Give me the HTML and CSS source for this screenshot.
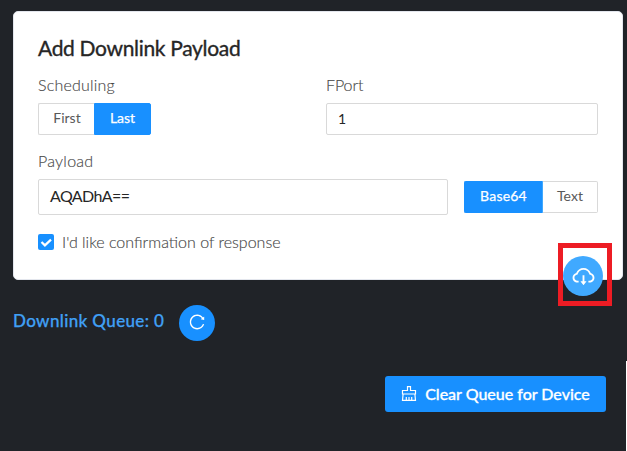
FILE: index.html
```html
<!DOCTYPE html>
<html lang="en">
<head>
<meta charset="utf-8">
<title>Downlink</title>
<link rel="stylesheet" href="styles.css">
</head>
<body>
<main class="page">
  <section class="card">
    <h1 class="title"><span>Add Downlink Payload</span></h1>
    <div class="row">
      <div class="field">
        <div class="label"><span class="t-sched">Scheduling</span></div>
        <div class="group">
          <button class="opt first"><span class="t-first">First</span></button>
          <button class="opt last on"><span class="t-last">Last</span></button>
        </div>
      </div>
      <div class="field port">
        <div class="label"><span class="t-port">FPort</span></div>
        <div class="input small">1</div>
      </div>
    </div>
    <div class="label payload-label"><span class="t-pay">Payload</span></div>
    <div class="payload-row">
      <div class="input large"><span class="t-value">AQADhA==</span></div>
      <div class="group">
        <button class="opt base on"><span class="t-base">Base64</span></button>
        <button class="opt text"><span class="t-text">Text</span></button>
      </div>
    </div>
    <div class="confirm">
      <span class="check"><svg width="16" height="16" viewBox="0 0 16 16"><path d="M3.500 8 6.900 11.400 13 5.600" fill="none" stroke="#fff" stroke-width="2.200"/></svg></span>
      <span class="t-confirm">I'd like confirmation of response</span>
    </div>
    <div class="highlight">
      <button class="round send" aria-label="Send">
        <svg width="25" height="25" viewBox="0 0 1024 1024" fill="#fff"><path d="M624 706.300h-74.100V464c0-4.400-3.600-8-8-8h-60c-4.400 0-8 3.600-8 8v242.300H400c-6.700 0-10.400 7.700-6.300 12.900l112 141.700a8 8 0 0 0 12.600 0l112-141.700c4.100-5.200.4-12.900-6.300-12.900z"/><path d="M811.400 366.700C765.600 245.900 648.900 160 512.200 160S258.800 245.800 213 366.600C127.300 389.100 64 467.200 64 560c0 110.500 89.500 200 199.900 200H304c4.400 0 8-3.600 8-8v-60c0-4.400-3.600-8-8-8h-40.100c-33.700 0-65.400-13.400-89-37.700-23.500-24.200-36-56.800-34.900-90.600.9-26.400 9.900-51.200 26.200-72.100 16.700-21.300 40.100-36.800 66.100-43.700l37.900-9.900 13.900-36.600c8.600-22.800 20.600-44.100 35.700-63.400a245.600 245.600 0 0 1 52.400-49.900c41.100-28.900 89.500-44.200 140-44.200s98.900 15.300 140 44.200c19.900 14 37.500 30.800 52.400 49.900 15.100 19.300 27.100 40.700 35.700 63.400l13.800 36.500 37.800 10C846.100 454.500 884 503.800 884 560c0 33.100-12.900 64.300-36.300 87.700a123.070 123.070 0 0 1-87.600 36.300H720c-4.400 0-8 3.600-8 8v60c0 4.400 3.600 8 8 8h40.100C870.500 760 960 670.500 960 560c0-92.700-63.100-170.700-148.600-193.300z"/></svg>
      </button>
    </div>
  </section>
  <div class="queue">
    <span class="t-queue">Downlink Queue: 0</span>
    <button class="round refresh" aria-label="Refresh">
      <svg width="18" height="18" viewBox="0 0 1024 1024" fill="#fff"><path d="M909.100 209.300l-56.400 44.100C775.800 155.100 656.200 92 521.900 92 290 92 102.300 279.500 102 511.500 101.700 743.700 289.800 932 521.900 932c181.300 0 335.800-115 394.600-276.100 1.500-4.200-.7-8.900-4.900-10.300l-56.700-19.500a8 8 0 0 0-10.100 4.800c-1.800 5-3.800 10-5.900 14.900-17.300 41-42.100 77.800-73.700 109.400A344.770 344.770 0 0 1 655.900 829c-42.300 17.900-87.400 27-133.800 27-46.500 0-91.500-9.100-133.800-27A341.500 341.500 0 0 1 279 755.200a342.160 342.160 0 0 1-73.700-109.400c-17.900-42.400-27-87.400-27-133.900s9.100-91.500 27-133.900c17.300-41 42.100-77.800 73.700-109.400 31.600-31.600 68.400-56.400 109.300-73.800 42.300-17.900 87.400-27 133.800-27 46.500 0 91.500 9.100 133.800 27a341.500 341.500 0 0 1 109.300 73.800c9.900 9.900 19.200 20.400 27.800 31.400l-60.200 47a8 8 0 0 0 3 14.100l175.600 43c5 1.200 9.900-2.600 9.900-7.700l.8-180.900c-.1-6.600-7.800-10.300-13-6.200z"/></svg>
    </button>
  </div>
  <div class="actions">
    <button class="clear">
      <svg width="16" height="16" viewBox="0 0 16 16" fill="none" stroke="#fff" stroke-width="1.200"><path d="M6.500 4.500V.6h3v3.900h5v3.500H1.500V4.500zM2.100 8l-.6 6.400h13L13.900 8M5.300 14.400V11M8 14.400V11M10.700 14.400V11"/></svg>
      <span class="t-clear">Clear Queue for Device</span>
    </button>
    <i class="edge"></i>
  </div>
</main>
</body>
</html>
```
FILE: styles.css
```css
* { box-sizing: border-box; }
body { margin: 0; background: #202328; font-family: Lato, "Liberation Sans", sans-serif; overflow: hidden; }
button { font: inherit; margin: 0; padding: 0; border: 0; display: flex; align-items: center; justify-content: center; }
span, .label, .input { white-space: nowrap; }
svg { display: block; flex: none; }
.page { width: 627px; height: 451px; padding: 11px 0 0 13px; }
.card { position: relative; width: 610px; height: 269px; padding: 22px 24px 0; background: #fff; border: 1px solid #e3e6ed; border-radius: 5px; }
.title { margin: 0; font-size: 21px; line-height: 28px; font-weight: 400; letter-spacing: -.32px; color: #262626; -webkit-text-stroke: .35px #262626; }
.row { display: flex; margin-top: 13px; }
.field { width: 288px; }
.port { width: 272px; }
.label { height: 20px; line-height: 20px; font-size: 16px; font-weight: 300; color: #444; letter-spacing: .2px; -webkit-text-stroke: .15px #555; }
.group { display: flex; height: 32px; }
.field .group, .small { margin-top: 8px; }
.opt { height: 32px; background: #fff; border: 1px solid #d9d9d9; color: #595959; font-size: 14px; padding-bottom: 3px; }
.opt.on { background: #1890ff; border-color: #1890ff; color: #fff; -webkit-text-stroke: .25px #fff; }
.first { width: 56px; border-right: 0; border-radius: 2px 0 0 2px; padding-left: 1px; }
.t-port { letter-spacing: -.1px; }
.last { width: 57px; border-radius: 0 2px 2px 0; }
.base { width: 79px; border-radius: 2px 0 0 2px; border-right-color: #40a9ff !important; }
.t-base { letter-spacing: .2px; }
.text { width: 55px; border-left: 0; border-radius: 0 2px 2px 0; }
.input { border: 1px solid #d9d9d9; border-radius: 2px; color: #262626; display: flex; align-items: center; padding-left: 11px; }
.small { height: 32px; font-size: 14px; padding-bottom: 2px; }
.large { width: 410px; height: 36px; font-size: 16px; padding-bottom: 3px; }
.t-value { letter-spacing: -.6px; }
.payload-label { margin-top: 16px; }
.t-pay { letter-spacing: .25px; }
.payload-row { display: flex; gap: 16px; align-items: center; margin-top: 8px; }
.confirm { display: flex; align-items: center; gap: 8px; margin-top: 17px; height: 20px; font-size: 16px; font-weight: 300; color: #444; }
.t-confirm { padding-bottom: 2px; -webkit-text-stroke: .15px #555; }
.check { width: 16px; height: 16px; background: #1890ff; border-radius: 2px; }
.highlight { position: absolute; left: 544px; top: 231px; width: 54px; height: 63px; border: 5px solid #ed1c24; }
.round { border-radius: 50%; }
.send { width: 40px; height: 40px; margin-top: 8px; background: #40a9ff; }
.queue { display: flex; align-items: center; height: 36px; margin-top: 25px; gap: 14px; color: #40a0f5; font-size: 17px; font-weight: 500; }
.t-queue { width: 152px; padding-bottom: 5px; letter-spacing: .37px; -webkit-text-stroke: .25px #40a0f5; }
.refresh { width: 36px; height: 36px; padding-bottom: 2px; background: #1890ff; }
.actions { display: flex; justify-content: flex-end; margin-top: 20px; height: 90px; }
.clear { width: 221px; height: 36px; margin: 15px 20px 0 0; gap: 8px; border-radius: 3px; background: #1890ff; color: #fff; font-size: 16px; font-weight: 500; -webkit-text-stroke: .3px #fff; }
.t-clear { padding-bottom: 2px; }
.edge { width: 1px; height: 90px; background: #fff; }
```
